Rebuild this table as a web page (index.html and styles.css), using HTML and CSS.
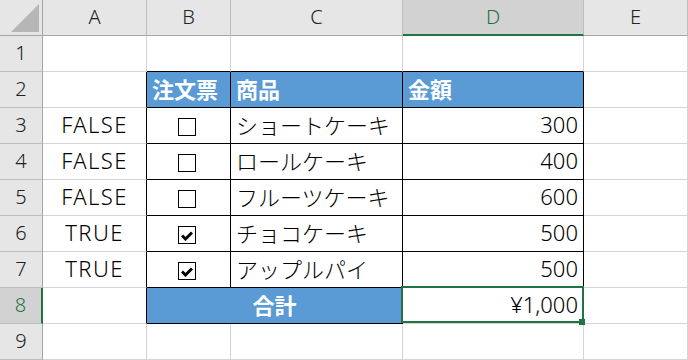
FILE: index.html
```html
<!DOCTYPE html>
<html lang="ja">
<head>
  <meta charset="UTF-8">
  <title>注文表</title>
  <link rel="stylesheet" href="styles.css">
</head>
<body>

  <div class="sheet">
    <!-- column headers -->
    <div class="corner"><div class="tri"></div></div>
    <div class="hd">A</div>
    <div class="hd">B</div>
    <div class="hd">C</div>
    <div class="hd active">D</div>
    <div class="hd">E</div>

    <!-- row 1 -->
    <div class="rh">1</div>
    <div class="c"></div>
    <div class="c top"></div>
    <div class="c top"></div>
    <div class="c top"></div>
    <div class="c"></div>

    <!-- row 2 -->
    <div class="rh">2</div>
    <div class="c left"></div>
    <div class="c t th">注文票</div>
    <div class="c t th">商品</div>
    <div class="c t th">金額</div>
    <div class="c"></div>

    <!-- row 3 -->
    <div class="rh">3</div>
    <div class="c left mid bool">FALSE</div>
    <div class="c t mid"><span class="box"></span></div>
    <div class="c t">ショートケーキ</div>
    <div class="c t num">300</div>
    <div class="c"></div>

    <!-- row 4 -->
    <div class="rh">4</div>
    <div class="c left mid bool">FALSE</div>
    <div class="c t mid"><span class="box"></span></div>
    <div class="c t">ロールケーキ</div>
    <div class="c t num">400</div>
    <div class="c"></div>

    <!-- row 5 -->
    <div class="rh">5</div>
    <div class="c left mid bool">FALSE</div>
    <div class="c t mid"><span class="box"></span></div>
    <div class="c t">フルーツケーキ</div>
    <div class="c t num">600</div>
    <div class="c"></div>

    <!-- row 6 -->
    <div class="rh">6</div>
    <div class="c left mid bool">TRUE</div>
    <div class="c t mid">
      <span class="box"><svg width="12" height="10" viewBox="0 0 12 10"><polyline points="1,4.5 4.5,8 11,1.5" fill="none" stroke="#000" stroke-width="3"/></svg></span>
    </div>
    <div class="c t">チョコケーキ</div>
    <div class="c t num">500</div>
    <div class="c"></div>

    <!-- row 7 -->
    <div class="rh">7</div>
    <div class="c left mid bool">TRUE</div>
    <div class="c t mid">
      <span class="box"><svg width="12" height="10" viewBox="0 0 12 10"><polyline points="1,4.5 4.5,8 11,1.5" fill="none" stroke="#000" stroke-width="3"/></svg></span>
    </div>
    <div class="c t">アップルパイ</div>
    <div class="c t num">500</div>
    <div class="c"></div>

    <!-- row 8 -->
    <div class="rh active">8</div>
    <div class="c left"></div>
    <div class="c t th total">合計</div>
    <div class="c num sel">¥1,000</div>
    <div class="c"></div>

    <!-- row 9 -->
    <div class="rh">9</div>
    <div class="c"></div>
    <div class="c"></div>
    <div class="c"></div>
    <div class="c"></div>
    <div class="c"></div>
  </div>

</body>
</html>
```

FILE: styles.css
```css
body {
  margin: 0;
  background-color: #fff;
  font-family: "Noto Sans", "Noto Sans CJK JP", sans-serif;
}
.sheet {
  display: grid;
  grid-template-columns: 43px 104px 84px 172px 181px 1fr;
  grid-template-rows: repeat(10, 36px);
  width: 688px;
  height: 360px;
  overflow: hidden;
}
.sheet > div {
  box-sizing: border-box;
}

/* headers */
.corner {
  display: flex;
  justify-content: flex-end;
  align-items: flex-end;
  padding: 0 3px 3px 0;
  background-color: #e6e6e6;
  border-right: 1px solid #a6a6a6;
  border-bottom: 1px solid #a6a6a6;
}
.tri {
  width: 28px;
  height: 28px;
  background-color: #b6b6b6;
  clip-path: polygon(100% 0, 100% 100%, 0 100%);
}
.hd {
  display: flex;
  justify-content: center;
  align-items: center;
  padding-bottom: 2px;
  background-color: #e6e6e6;
  color: #222;
  font-size: 20px;
  font-weight: 300;
  border-right: 1px solid #bdbdbd;
  border-bottom: 1px solid #a6a6a6;
}
.hd.active {
  background-color: #d2d2d2;
  color: #217346;
  border-bottom: 2px solid #217346;
}
.rh {
  display: flex;
  justify-content: center;
  align-items: center;
  padding-bottom: 2px;
  background-color: #e6e6e6;
  color: #222;
  font-size: 20px;
  font-weight: 300;
  border-right: 1px solid #a6a6a6;
  border-bottom: 1px solid #bdbdbd;
}
.rh.active {
  background-color: #d2d2d2;
  color: #217346;
  border-right: 2px solid #217346;
}

/* cells */
.c {
  display: flex;
  align-items: center;
  padding: 0 5px 3px;
  font-size: 22px;
  font-weight: 300;
  color: #000;
  white-space: nowrap;
  border-right: 1px solid #d4d4d4;
  border-bottom: 1px solid #d4d4d4;
}
.c.mid {
  justify-content: center;
}
.c.bool {
  letter-spacing: 1.4px;
}
.c.num {
  justify-content: flex-end;
}
.c.top {
  border-bottom-color: #000;
}
.c.left {
  border-right-color: #000;
}
.c.t {
  border-right-color: #000;
  border-bottom-color: #000;
}
.c.th {
  background-color: #5b9bd5;
  color: #fff;
  font-weight: bold;
}
.c.total {
  grid-column: span 2;
  justify-content: center;
}

/* checkbox */
.box {
  display: flex;
  justify-content: center;
  align-items: center;
  width: 18px;
  height: 18px;
  box-sizing: border-box;
  border: 1.5px solid #000;
  margin: 5px 3px 0 0;
}
.box svg {
  margin: 2px 1px 0 0;
}

/* selected cell */
.sel {
  position: relative;
}
.sel::after {
  content: "";
  position: absolute;
  top: -2px;
  left: -2px;
  right: -1px;
  bottom: 0;
  border: 2px solid #217346;
}
.sel::before {
  content: "";
  position: absolute;
  right: -2px;
  bottom: -2px;
  width: 6px;
  height: 6px;
  background-color: #217346;
  z-index: 1;
}
```
